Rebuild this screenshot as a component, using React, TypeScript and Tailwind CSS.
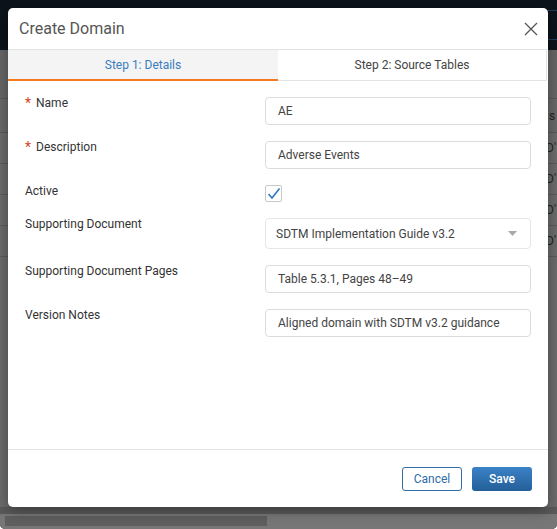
import React from "react";

const rows = [
  { label: "Name", required: true, value: "AE", kind: "input" },
  { label: "Description", required: true, value: "Adverse Events", kind: "input" },
  { label: "Active", required: false, value: "", kind: "checkbox" },
  { label: "Supporting Document", required: false, value: "SDTM Implementation Guide v3.2", kind: "select" },
  { label: "Supporting Document Pages", required: false, value: "Table 5.3.1, Pages 48–49", kind: "input" },
  { label: "Version Notes", required: false, value: "Aligned domain with SDTM v3.2 guidance", kind: "input" },
];

const Field = ({ kind, value }: { kind: string; value: string }) => {
  if (kind === "checkbox") {
    return (
      <div className="h-[17px] w-[17px] rounded-[2px] border border-[#c8c8c8] bg-white flex items-center justify-center">
        <svg width="14" height="13" viewBox="0 0 14 13">
          <path d="M1.5 7 L5 11 L12.5 1.5" fill="none" stroke="#2f78c2" strokeWidth="1.6" />
        </svg>
      </div>
    );
  }
  if (kind === "select") {
    return (
      <div className="h-[31px] w-full rounded-[4px] border border-[#e6e6e6] bg-white flex items-center justify-between pl-[10px] pr-[13px]">
        <span className="text-[12px] text-[#444]">{value}</span>
        <svg width="9" height="5" viewBox="0 0 9 5">
          <path d="M0 0 H9 L4.5 5 Z" fill="#a9a9a9" />
        </svg>
      </div>
    );
  }
  return (
    <div className="h-[28px] w-full rounded-[4px] border border-[#dcdcdc] bg-white flex items-center pl-[12px]">
      <span className="text-[12px] text-[#444]">{value}</span>
    </div>
  );
};

export default function App() {
  return (
    <div className="relative w-[557px] h-[529px] overflow-hidden rounded-b-[5px] bg-[#6b6b6b] font-['Roboto',sans-serif]">
      {/* page behind the overlay */}
      <div className="h-[50px] bg-[#0c131b] flex justify-end items-start pt-[10px]">
        <div className="h-[30px] w-[40px] -mr-[16px] rounded-[4px] border border-[#1f3b5c]" />
      </div>
      <div className="h-[48px] bg-[#666]" />
      <div className="flex flex-col">
        <div className="h-[35px] border-y border-[#595959] bg-[#686868] flex items-center pl-[549px] text-[12px] text-[#222]">
          s
        </div>
        {[0, 1, 2, 3].map((i) => (
          <div
            key={i}
            className="h-[31px] border-b border-[#5b5b5b] flex items-center pl-[546px] text-[12px] text-[#222] whitespace-nowrap"
          >
            D'
          </div>
        ))}
      </div>
      <div className="absolute left-0 right-0 bottom-0 h-[22px] bg-[#5a5a5a] flex items-end">
        <div className="w-full h-[15px] bg-[#777] pt-[2px] pl-[5px] pb-[3px]">
          <div className="h-full w-[262px] bg-[#5f5f5f]" />
        </div>
      </div>

      {/* modal */}
      <div className="absolute left-[8px] top-[8px] w-[540px] h-[499px] bg-white rounded-[5px] shadow-[0_4px_14px_rgba(0,0,0,0.35)] flex flex-col">
        <div className="h-[41px] flex items-center justify-between pl-[11px] pr-[10px]">
          <span className="text-[16px] text-[#555] pt-[1px]">Create Domain</span>
          <svg width="14" height="14" viewBox="0 0 14 14">
            <path d="M1 1 L13 13 M13 1 L1 13" stroke="#555" strokeWidth="1.3" />
          </svg>
        </div>
        <div className="flex h-[32px] border-t border-[#e3e3e3] mr-[1px]">
          <div className="w-[270px] bg-[#f4f4f4] border-b-2 border-[#f47a20] flex items-center justify-center text-[12px] text-[#3a7cc0]">
            Step 1: Details
          </div>
          <div className="flex-1 border-b border-r border-[#e3e3e3] flex items-center justify-center text-[12px] text-[#444]">
            Step 2: Source Tables
          </div>
        </div>
        <div className="flex-1 px-[17px] pt-[16px] flex flex-col gap-[16px]">
          {rows.map((r) => (
            <div key={r.label} className="flex items-start">
              <div className="w-[240px] -mt-[2px] leading-[16px] text-[12px] text-[#333] flex items-center">
                {r.required && <span className="text-[#d4452b] mr-[5px] text-[14px]">*</span>}
                {r.label}
              </div>
              <div className="flex-1">
                <Field kind={r.kind} value={r.value} />
              </div>
            </div>
          ))}
        </div>
        <div className="h-[58px] border-t border-[#e5e5e5] flex items-center justify-end gap-[10px] pr-[16px]">
          <button className="h-[24px] w-[60px] rounded-[3px] border border-[#2f6ca8] bg-white text-[12px] text-[#2f6ca8]">
            Cancel
          </button>
          <button className="h-[24px] w-[60px] rounded-[3px] bg-gradient-to-b from-[#3b82c8] to-[#245f98] text-[12px] font-medium text-white">
            Save
          </button>
        </div>
      </div>
    </div>
  );
}
